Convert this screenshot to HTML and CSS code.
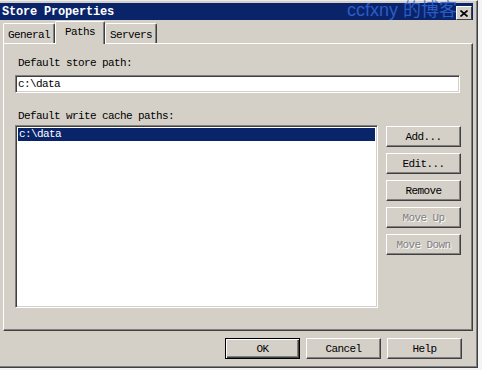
FILE: index.html
```html
<!DOCTYPE html>
<html lang="en">

<head>
  <meta charset="UTF-8" />
  <title>Store Properties</title>
  <link rel="stylesheet" href="styles.css">
</head>

<body>
  <div class="window">
    <div class="titlebar">
      <span class="title">Store Properties</span>
      <span class="watermark">ccfxny 的博客</span>
      <span class="close-btn">
        <svg width="8" height="7" viewBox="0 0 8 7">
          <path d="M0.5 0.5 L7.5 6.5 M7.5 0.5 L0.5 6.5" stroke="#000" stroke-width="1.6" />
        </svg>
      </span>
    </div>

    <div class="tabs">
      <div class="tab tab-general">General</div>
      <div class="tab tab-paths active">Paths</div>
      <div class="tab tab-servers">Servers</div>
    </div>

    <div class="panel">
      <div class="label first">Default store path:</div>
      <div class="textbox">c:\data</div>

      <div class="label second">Default write cache paths:</div>
      <div class="list-row">
        <div class="listbox">
          <div class="list-item selected">c:\data</div>
        </div>
        <div class="side-buttons">
          <button class="btn">Add...</button>
          <button class="btn">Edit...</button>
          <button class="btn">Remove</button>
          <button class="btn" disabled>Move Up</button>
          <button class="btn" disabled>Move Down</button>
        </div>
      </div>
    </div>

    <div class="dialog-buttons">
      <button class="btn default">OK</button>
      <button class="btn">Cancel</button>
      <button class="btn">Help</button>
    </div>
  </div>
</body>

</html>
```

FILE: styles.css
```css
html,
body {
  margin: 0;
  padding: 0;
  background-color: #f4f4f4;
  font-family: "Liberation Mono", "Noto Sans CJK SC", monospace;
  font-size: 11px;
  letter-spacing: -0.6px;
  color: #000;
}

.window {
  box-sizing: border-box;
  width: 478px;
  height: 368px;
  padding: 3px 4px 0 0;
  background-color: #d4d0c8;
  border-top: 1px solid #ececec;
  border-right: 1px solid #404040;
  border-bottom: 1px solid #404040;
  box-shadow: inset -1px -1px 0 #808080;
}

.titlebar {
  position: relative;
  height: 17px;
  margin-top: -1px;
  background-color: #0a246a;
  color: white;
  display: flex;
  align-items: center;
}

.title {
  padding-left: 2px;
  font-weight: bold;
  font-size: 12px;
  letter-spacing: -0.2px;
}

/* blog watermark stamped over the title bar */
.watermark {
  position: absolute;
  left: 347px;
  top: -2px;
  font-family: "Liberation Sans", "Noto Sans CJK SC", sans-serif;
  font-size: 18px;
  line-height: 18px;
  letter-spacing: 0;
  color: #3366d6;
  opacity: 0.85;
}

.close-btn {
  position: absolute;
  right: 1px;
  top: 3px;
  box-sizing: border-box;
  width: 16px;
  height: 14px;
  background-color: #d4d0c8;
  border-top: 1px solid #fff;
  border-left: 1px solid #fff;
  border-right: 1px solid #404040;
  border-bottom: 1px solid #404040;
  display: flex;
  align-items: center;
  justify-content: center;
}

.tabs {
  display: flex;
  align-items: flex-end;
  height: 22px;
  margin-top: 1px;
  padding-left: 3px;
}

.tab {
  position: relative;
  box-sizing: border-box;
  height: 20px;
  padding-top: 5px;
  text-align: center;
  border-top: 1px solid #fff;
  border-left: 1px solid #fff;
  border-right: 1px solid #404040;
  border-radius: 2px 2px 0 0;
  box-shadow: inset -1px 0 0 #808080;
}

.tab-general {
  width: 52px;
}

.tab-paths {
  width: 50px;
}

.tab-servers {
  width: 52px;
}

.tab.active {
  z-index: 1;
  height: 23px;
  margin-bottom: -1px;
  padding-top: 4px;
  background-color: #d4d0c8;
}

.panel {
  box-sizing: border-box;
  width: 470px;
  height: 288px;
  margin-left: 3px;
  padding: 0 11px 0 11px;
  border-top: 1px solid #fff;
  border-left: 1px solid #fff;
  border-right: 1px solid #404040;
  border-bottom: 1px solid #404040;
  box-shadow: inset -1px -1px 0 #808080;
}

.label {
  height: 12px;
  line-height: 12px;
  padding-left: 3px;
}

.label.first {
  margin-top: 13px;
}

.label.second {
  margin-top: 17px;
}

.textbox {
  box-sizing: border-box;
  width: 445px;
  height: 18px;
  margin-top: 6px;
  padding: 1px 0 0 2px;
  background: white;
  border-top: 1px solid #808080;
  border-left: 1px solid #808080;
  border-right: 1px solid #fff;
  border-bottom: 1px solid #fff;
  box-shadow: inset 1px 1px 0 #404040, inset -1px -1px 0 #d4d0c8;
  line-height: 14px;
}

.list-row {
  display: flex;
  gap: 8px;
  margin-top: 3px;
}

.listbox {
  box-sizing: border-box;
  width: 364px;
  height: 183px;
  padding: 2px;
  background: white;
  border-top: 1px solid #808080;
  border-left: 1px solid #808080;
  border-right: 1px solid #fff;
  border-bottom: 1px solid #fff;
  box-shadow: inset 1px 1px 0 #404040, inset -1px -1px 0 #d4d0c8;
}

.list-item {
  height: 13px;
  line-height: 13px;
  padding-left: 1px;
}

.list-item.selected {
  background-color: #0a246a;
  color: white;
}

.side-buttons {
  display: flex;
  flex-direction: column;
  gap: 6px;
  margin-top: 1px;
}

.btn {
  box-sizing: border-box;
  width: 75px;
  height: 21px;
  padding: 0;
  font-family: inherit;
  font-size: 11px;
  letter-spacing: -0.6px;
  color: #000;
  background-color: #d4d0c8;
  border-top: 1px solid #fff;
  border-left: 1px solid #fff;
  border-right: 1px solid #404040;
  border-bottom: 1px solid #404040;
  border-radius: 0;
  box-shadow: inset -1px -1px 0 #808080;
}

.btn:disabled {
  color: #808080;
  text-shadow: 1px 1px 0 #fff;
}

.btn.default {
  border: 1px solid #000;
  box-shadow: inset 1px 1px 0 #fff, inset -1px -1px 0 #404040, inset -2px -2px 0 #808080;
}

.dialog-buttons {
  display: flex;
  justify-content: flex-end;
  gap: 6px;
  margin-top: 7px;
  padding-right: 11px;
}
```
